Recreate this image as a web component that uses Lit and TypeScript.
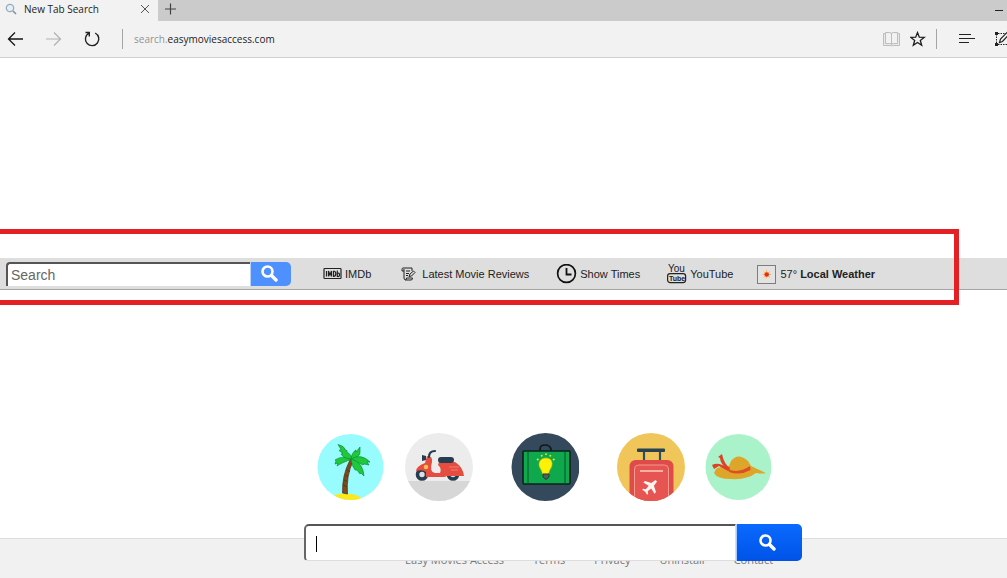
import { LitElement, html, css, svg } from "lit";
import { customElement } from "lit/decorators.js";

const lens = svg`<circle cx="6.5" cy="6.5" r="5" fill="none" stroke="currentColor" stroke-width="2.6"/><path d="M10.5 10.5 15 15" stroke="currentColor" stroke-width="3.4" stroke-linecap="round"/>`;

@customElement("browser-chrome")
class BrowserChrome extends LitElement {
  static styles = css`
    :host { display: block; font-family: "Open Sans", "Noto Sans", sans-serif; color: #1c1c1c; }
    .tabs { display: flex; height: 21px; background: #cbcbcb; }
    .tab { display: flex; align-items: center; width: 158px; box-sizing: border-box; padding: 0 8px 3px 5px; background: #f2f2f2; font-size: 10px; line-height: 16px; }
    .title { flex: 1; padding-left: 7px; white-space: nowrap; }
    button { display: block; border: 0; padding: 0; background: none; color: inherit; }
    svg { display: block; }
    .add { padding: 0 6px 3px 6px; color: #333; }
    .min { margin-left: auto; padding-right: 3px; }
    .bar { display: flex; align-items: center; height: 36px; padding-left: 7px; background: #f2f2f2; border-bottom: 1px solid #d0d0d0; overflow: hidden; }
    .nav { display: flex; gap: 21px; }
    .rule { width: 1px; height: 20px; background: #a5a5a5; }
    .nav + .rule { margin: 0 11px 0 21px; }
    .url { flex: 1; font-size: 10px; line-height: 16px; white-space: nowrap; }
    .url span { color: #939393; }
    .tools { display: flex; align-items: center; gap: 10px; }
    .tools .rule { margin-right: 12px; }
    .hub { margin-right: 9px; }
  `;
  render() {
    return html`
      <div class="tabs">
        <div class="tab">
          <svg width="12" height="12" viewBox="0 0 12 12" fill="none"><circle cx="5" cy="5" r="3.7" fill="#e4eef6" stroke="#9aabb9" stroke-width="1.3"/><path d="m8 8 3 3" stroke="#8093a2" stroke-width="1.6"/></svg>
          <span class="title">New Tab Search</span>
          <button aria-label="Close tab"><svg width="10" height="10" viewBox="0 0 10 10"><path d="m1 1 8 8M9 1 1 9" stroke="#555" /></svg></button>
        </div>
        <button class="add" aria-label="New tab"><svg width="14" height="12" viewBox="0 0 14 12"><path d="M6.500 .5v11M1 6h11" stroke="#444" stroke-width="1.2"/></svg></button>
        <button class="min" aria-label="Minimize"><svg width="9" height="4" viewBox="0 0 9 4"><path d="M0 1.500h8" stroke="#222"/></svg></button>
      </div>
      <div class="bar">
        <div class="nav">
          <button aria-label="Back"><svg width="17" height="18" viewBox="0 0 17 18" fill="none" stroke="#161616" stroke-width="1.3"><path d="M1.500 9H16M8 2.500 1.500 9 8 15.500"/></svg></button>
          <button aria-label="Forward"><svg width="17" height="18" viewBox="0 0 17 18" fill="none" stroke="#b2b2b2" stroke-width="1.2"><path d="M1 9h14.500M9 2.500 15.500 9 9 15.500"/></svg></button>
          <button aria-label="Refresh"><svg width="18" height="18" viewBox="0 0 18 18" fill="none" stroke="#222" stroke-width="1.400"><path d="M12.200 3A6.700 6.700 0 1 1 5.500 3.300M2.500 2.500h3.800v4"/></svg></button>
        </div>
        <div class="rule"></div>
        <div class="url"><span>search.</span>easymoviesaccess.com</div>
        <div class="tools">
          <button aria-label="Reading view"><svg width="17" height="16" viewBox="0 0 17 16" fill="#e9e9e9" stroke="#bdbdbd"><path d="M.5 2.500h2v-1h4q2 0 2 1.500 0-1.500 2-1.500h4v1h2v12h-7q-1 0-1 .7 0-.7-1-.7h-7zM2.500 2.500v10h4q2 0 2 1 0-1 2-1h4v-10M8.500 3v10.500"/></svg></button>
          <button aria-label="Favorite"><svg width="16" height="16" viewBox="0 0 16 16" fill="none" stroke="#1c1c1c" stroke-width="1.300"><path d="m7.500 1.600 1.800 4.600 4.900.2-3.900 3 1.400 4.800-4.200-2.700-4.200 2.700 1.400-4.800-3.900-3 4.900-.2z"/></svg></button>
          <div class="rule"></div>
          <button class="hub" aria-label="Hub"><svg width="17" height="12" viewBox="0 0 17 12" stroke="#222" stroke-width="1.200"><path d="M0 1.500h12M0 5.500h16M0 9.500h10"/></svg></button>
          <button aria-label="Web note"><svg width="12" height="16" viewBox="0 0 12 16" fill="none" stroke="#222"><path d="M1.500 3v11M3 2.500h8M3 13.500h9" stroke-dasharray="1.500 1"/><path d="M0 1h3v3H0zM0 12h3v3H0z" fill="#222" stroke="none"/><path d="m4.500 11.500 1-3.500L12 1.500l2 2-6.500 7z" stroke-width="1.200"/></svg></button>
        </div>
      </div>`;
  }
}

@customElement("movie-toolbar")
class MovieToolbar extends LitElement {
  static styles = css`
    :host { display: flex; align-items: center; height: 31px; padding-left: 6px; background: #dedede; border-bottom: 1px solid #a5a5a5; font: 11px/16px "Liberation Sans", Arial, sans-serif; color: #222; }
    form { display: flex; height: 24px; width: 285px; margin-top: 1px; }
    input { flex: 1; min-width: 0; box-sizing: border-box; padding: 0 3px; border: 0; border-top: 2px solid #555; border-left: 2px solid #555; border-radius: 4px 0 0 0; background: #fff; font: 14px/20px "Liberation Sans", Arial, sans-serif; outline: 0; }
    input::placeholder { color: #666; opacity: 1; }
    button { display: grid; place-items: center; width: 41px; padding: 0 3px 1px 0; border: 0; border-left: 1px solid #b8d2fb; border-radius: 0 5px 5px 0; background: #4d90fe; color: #fff; }
    svg { display: block; flex: none; }
    ul { display: flex; gap: 24px; margin: 0; padding: 0 0 0 27px; list-style: none; white-space: nowrap; }
    a { display: flex; align-items: center; gap: 3px; height: 22px; color: inherit; text-decoration: none; }
    text { font-family: "Liberation Sans", Arial, sans-serif; font-weight: bold; fill: #222; }
    .you { font-weight: normal; }
  `;
  render() {
    return html`
      <form @submit=${(e: Event) => e.preventDefault()}>
        <input type="text" placeholder="Search" aria-label="Search movies" />
        <button aria-label="Search"><svg width="17" height="17" viewBox="0 0 17 17">${lens}</svg></button>
      </form>
      <ul>
        <li><a href="#imdb"><svg width="24" height="14" viewBox="0 0 24 14"><rect x="6" y="1.500" width="17" height="10" rx=".8" fill="none" stroke="#222" stroke-width="1.200"/><path d="M8.500 4v5.500M10.500 9.500V4l1.500 4L13.500 4v5.500M15.500 4v5.500q2.300 0 2.300-2.700T15.500 4M19.300 3.500v6q2.200.5 2.200-1.700t-2.200-1.600" fill="none" stroke="#222" stroke-width="1.200"/></svg>IMDb</a></li>
        <li><a href="#reviews"><svg width="24" height="16" viewBox="-2 0 24 16" fill="none" stroke="#222"><path d="M15 5V2H6Q5 2 5 3.500v1.500H7V12q0 2 2 2h5q1.500 0 1.500-2H9.500q0 2-1 2M7 5V3M9 5h4M9 7.500h3M9 9.500h2"/><path d="m12 10.500 1-2.500 3.500-3L18 6.500 14.500 10z" fill="#dedede"/></svg>Latest Movie Reviews</a></li>
        <li><a href="#times"><svg width="24" height="20" viewBox="0 0 24 20" fill="none" stroke="#111"><circle cx="13.500" cy="9.500" r="8.900" stroke-width="1.700"/><path d="M13.500 4v6.500h5" stroke-width="1.800"/></svg>Show Times</a></li>
        <li><a href="#youtube"><svg width="23" height="22" viewBox="0 0 23 22"><rect x="3.600" y="10.600" width="18" height="9" rx="2.500" fill="none" stroke="#222" stroke-width="1.200"/><text class="you" x="4" y="9" font-size="10">You</text><text x="5" y="18" font-size="7">Tube</text></svg>YouTube</a></li>
        <li><a href="#weather"><svg width="20" height="20" viewBox="0 0 20 20"><rect x=".5" y="1.500" width="18" height="18" fill="#e3e3e3" stroke="#7d7d7d"/><path d="M9.500 6v8.500M5.500 10.500h8.500M6.700 7.500l6 6M12.700 7.500l-6 6" stroke="#ffb466" stroke-width="1"/><circle cx="9.700" cy="10.500" r="2.300" fill="#ee2b0d"/></svg><span>57° <b>Local Weather</b></span></a></li>
      </ul>`;
  }
}

const palm = svg`<svg class="disc" viewBox="0 0 68 68"><defs><clipPath id="p"><circle cx="33.500" cy="34" r="33"/></clipPath></defs><g clip-path="url(#p)"><path fill="#98fbfd" d="M0 0h68v68H0z"/><ellipse cx="28" cy="68" rx="18" ry="7.500" fill="#fbe91c"/><path d="M33 27q-8 15-7.500 33l5 1Q29 43 36 28z" fill="#7c4a1d" stroke="#4d3214" stroke-width=".7"/><path d="m30 37 3 1.500M28 42l3 1.500M27 47l3 1.500M26 52l3.500 1.500" stroke="#4d3214" stroke-width=".8"/><g fill="#1fc93c" stroke="#0b8130" stroke-width=".6"><path d="M35 26Q24 30 20 33l1-3-3 1 1-3-1-1q7-5 17-1z"/><path d="M35 26Q27 26 24 21l2-.5-4-3 2-1-3-5q6 1 8 6l1 0 0 2q4 1 5 7z"/><path d="M34 26q1-7 5-9l0 2 4-5 0 4q1 6-9 9z"/><path d="M34 26q10-6 19 3l-3 0 2 3-5-1-1 1Q41 29 34 27z"/><path d="M34 26q12 3 13 17l-3-3-1 1-3-4-2 0Q35 33 34 27z"/></g></g></svg>`;
const scooter = svg`<svg class="disc" viewBox="0 0 68 68"><defs><clipPath id="s"><circle cx="34" cy="34" r="34"/></clipPath></defs><g clip-path="url(#s)"><path fill="#ececec" d="M0 0h68v68H0z"/><path fill="#d7d7d7" d="M0 48h68v20H0z"/></g><g fill="#d9e1e4" stroke="#263d50" stroke-width="3.600"><circle cx="17" cy="41.500" r="4.500"/><circle cx="48" cy="41.500" r="4.500"/></g><path d="M22 23q6 0 5 6-3 10 3 11h5q2-5-2-8l1-3h16q8 5 9 14H42q-2 1-3 1H21v-5q-4-3-10-.5Q11 33 20 30z" fill="#e64c3f"/><path d="M44 34h10M46 37h7" stroke="#ef8072"/><rect x="33" y="24" width="16" height="6" rx="3" fill="#263d50"/><path d="M24 24q0-6 6-6" stroke="#263d50" stroke-width="2.200" fill="none" stroke-linecap="round"/><path d="m17 22 4 1v4l-4 1z" fill="#263d50"/><circle cx="21" cy="34" r="2.300" fill="#f6c44c"/></svg>`;
const idea = svg`<svg class="disc" viewBox="0 0 68 68"><circle cx="34.500" cy="34" r="34" fill="#34495b"/><path d="M29 17.500v-1.500q0-4 5-4t6 4v1.500" fill="none" stroke="#10191c" stroke-width="1.700"/><rect x="12" y="18" width="47" height="33" rx="1" fill="#0fa84d" stroke="#0a221c" stroke-width="1.600"/><path d="M17 18v33M54 18v33" stroke="#07502d"/><path d="M35 25c-6 0-8 5-6.500 9q2.500 4 3 7h6q.5-3 3-7c2-5-.5-9-5.500-9z" fill="#fef007" stroke="#b5bf13" stroke-width=".6"/><path d="M32 41h6v3l-3 2.500-3-2.500z" fill="#52605b" stroke="#263b32"/><path d="m26 26 1.500 1M30.500 22l.5 1.500M35 20.500V22M39.500 22l-.5 1.500M43.500 26 42 27" stroke="#e5eb25" stroke-width="1.700"/></svg>`;
const suitcase = svg`<svg class="disc" viewBox="0 0 68 68"><defs><clipPath id="c"><circle cx="34" cy="34" r="34"/></clipPath></defs><g clip-path="url(#c)"><path fill="#f0c65b" d="M0 0h68v68H0z"/><path d="M27 18v10M43 18v10" stroke="#354e5b" stroke-width="2.200"/><rect x="20" y="15.500" width="28" height="3.500" rx="1" fill="#29424e"/><rect x="12.500" y="27" width="44" height="48" rx="6" fill="#df4b48"/><rect x="17.500" y="32" width="34" height="48" rx="4" fill="#e65552" stroke="#f29a8d"/><path d="M23 38h23" stroke="#f6b0a5" stroke-width="1.800"/><path transform="translate(34 53) rotate(45) scale(.75)" d="M-1.500-10h3l1 7 8 4v3l-8-2-.8 6 3 2v2L0 11l-4.700 1v-2l3-2-.8-6-8 2V1l8-4z" fill="#fff4ef"/></g></svg>`;
const hat = svg`<svg class="disc" viewBox="0 0 68 68"><circle cx="33.500" cy="34" r="33" fill="#aaf3ca"/><path d="M11 36q2-2 13-3l2-5q7-9 17 0l3 5q6 3 15 7-3 1-10 0-9 7-25 6-14 0-17-6z" fill="#dea52b"/><path d="M23 36q10 5 22-3l.5 4Q35 43 24 39z" fill="#df4d25"/><path d="m23 38-9-5-5 3-2-4q7-4 16 4zM24 38q-9-7-9-13l-2-1 4-3q2 10 8 14z" fill="#df4227"/></svg>`;

@customElement("app-root")
class AppRoot extends LitElement {
  static styles = css`
    :host { display: flex; flex-direction: column; min-height: 100vh; background: #fff; overflow: hidden; font-family: "Liberation Sans", Arial, sans-serif; }
    .marked { position: relative; margin-top: 200px; }
    .outline { position: absolute; top: -29px; left: -5px; right: 48px; height: 66px; border: 5px solid #e42025; pointer-events: none; }
    main { margin-top: 143px; padding-left: 304px; }
    .row { display: flex; gap: 38px; padding-left: 13px; }
    .pair { display: flex; gap: 20px; }
    .disc { display: block; width: 68px; height: 68px; flex: none; }
    a { color: inherit; text-decoration: none; }
    form { position: relative; display: flex; max-width: 498px; height: 37px; margin: 23px 0 -23px; }
    form::before { content: ""; position: absolute; left: 12px; top: 12px; width: 1px; height: 16px; background: #000; }
    input { flex: 1; min-width: 0; box-sizing: border-box; padding: 0 10px; border: 1px solid #ddd; border-top: 2px solid #555; border-left: 2px solid #666; border-radius: 5px 0 0 4px; background: #fff; font: 16px/20px "Liberation Sans", Arial, sans-serif; outline: 0; }
    button { display: grid; place-items: center; width: 66px; padding: 0 4px 0 0; border: 0; border-left: 1px solid #a9c8fb; border-radius: 0 5px 5px 0; background: linear-gradient(#0a6aff, #0053e6); color: #fff; }
    footer { flex: 1; background: #f1f1f1; border-top: 1px solid #ddd; font: 11px/16px "Open Sans", sans-serif; color: #777; }
    nav { display: flex; gap: 29px; padding: 13px 0 0 405px; white-space: nowrap; }
  `;
  render() {
    return html`
      <browser-chrome></browser-chrome>
      <div class="marked"><movie-toolbar></movie-toolbar><div class="outline"></div></div>
      <main>
        <div class="row">
          <div class="pair"><a href="#beach" aria-label="Beach">${palm}</a><a href="#rides" aria-label="Rides">${scooter}</a></div>
          <a href="#ideas" aria-label="Ideas">${idea}</a>
          <div class="pair"><a href="#travel" aria-label="Travel">${suitcase}</a><a href="#fashion" aria-label="Fashion">${hat}</a></div>
        </div>
        <form @submit=${(e: Event) => e.preventDefault()}>
          <input type="text" aria-label="Search the web" />
          <button aria-label="Search"><svg width="17" height="17" viewBox="0 0 17 17">${lens}</svg></button>
        </form>
      </main>
      <footer>
        <nav>
          <a href="#home">Easy Movies Access</a><a href="#terms">Terms</a><a href="#privacy">Privacy</a><a href="#uninstall">Uninstall</a><a href="#contact">Contact</a>
        </nav>
      </footer>`;
  }
}
